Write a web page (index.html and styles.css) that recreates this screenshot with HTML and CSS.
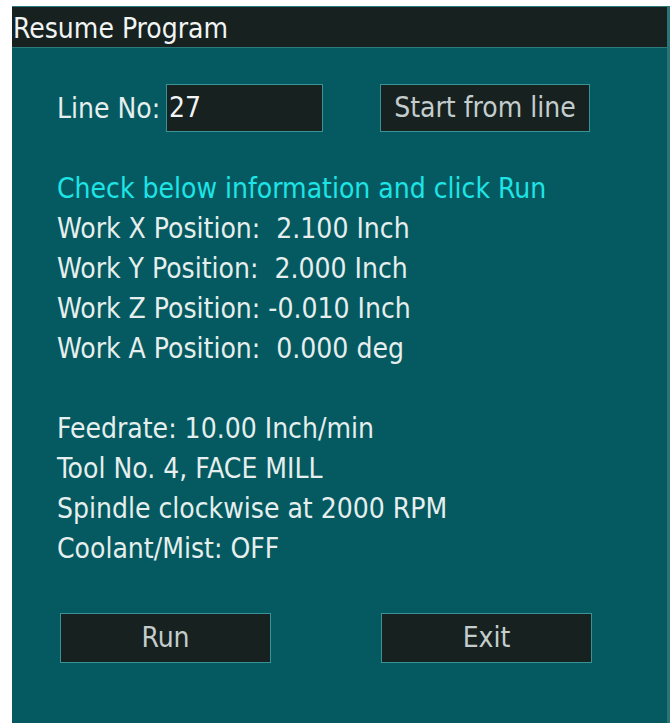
FILE: index.html
```html
<!DOCTYPE html>
<html>
<head>
<meta charset="utf-8">
<title>Resume Program</title>
<link rel="stylesheet" href="styles.css">
</head>
<body>
<div class="dialog">
  <div class="titlebar">Resume Program</div>
  <div class="content">
    <div class="line-row">
      <label class="label">Line No:</label>
      <div class="field">27</div>
      <div class="btn btn-start">Start from line</div>
    </div>
    <div class="info">
      <div class="line hint">Check below information and click Run</div>
      <div class="line">Work X Position:  2.100 Inch</div>
      <div class="line">Work Y Position:  2.000 Inch</div>
      <div class="line">Work Z Position: -0.010 Inch</div>
      <div class="line">Work A Position:  0.000 deg</div>
      <div class="line"></div>
      <div class="line">Feedrate: 10.00 Inch/min</div>
      <div class="line">Tool No. 4, FACE MILL</div>
      <div class="line">Spindle clockwise at 2000 RPM</div>
      <div class="line">Coolant/Mist: OFF</div>
    </div>
    <div class="actions">
      <div class="btn btn-wide">Run</div>
      <div class="btn btn-wide">Exit</div>
    </div>
  </div>
</div>
</body>
</html>
```
FILE: styles.css
```css
html, body {
  margin: 0;
  padding: 0;
  background: #ffffff;
}

body {
  font-family: "DejaVu Sans Condensed", "DejaVu Sans", Verdana, sans-serif;
  font-stretch: condensed;
  color: #e6eeee;
}

.dialog {
  margin: 6px 0 0 12px;
  height: 717px;
  background: #045a60;
  border-right: 3px solid #2b7478;
  box-sizing: border-box;
  display: flex;
  flex-direction: column;
}

.titlebar {
  height: 42px;
  box-sizing: border-box;
  background: #172220;
  border-top: 1px solid #2d7a7c;
  border-bottom: 1px solid #2d7a7c;
  padding: 2px 0 0 1px;
  font-size: 28px;
  line-height: 40px;
  color: #f2f4f4;
}

.content {
  padding: 36px 0 0 45px;
  display: flex;
  flex-direction: column;
}

.line-row {
  display: flex;
  align-items: center;
  height: 48px;
}

.label {
  font-size: 28px;
  width: 109px;
}

.field {
  width: 157px;
  height: 48px;
  box-sizing: border-box;
  background: #162120;
  border: 1px solid #3a9497;
  font-size: 28px;
  line-height: 46px;
  padding-left: 2px;
  color: #f2f4f4;
}

.btn {
  height: 48px;
  box-sizing: border-box;
  background: #162120;
  border: 1px solid #3a9497;
  color: #c4cccc;
  font-size: 28px;
  line-height: 46px;
  text-align: center;
}

.btn-start {
  width: 210px;
  margin-left: 57px;
}

.info {
  margin-top: 37px;
  display: flex;
  flex-direction: column;
}

.line {
  height: 40px;
  line-height: 40px;
  font-size: 28px;
  white-space: pre;
}

.hint {
  color: #1ee4e6;
}

.actions {
  margin-top: 44px;
  display: flex;
  gap: 110px;
  padding-left: 3px;
}

.btn-wide {
  width: 211px;
  height: 50px;
  line-height: 48px;
}
```
